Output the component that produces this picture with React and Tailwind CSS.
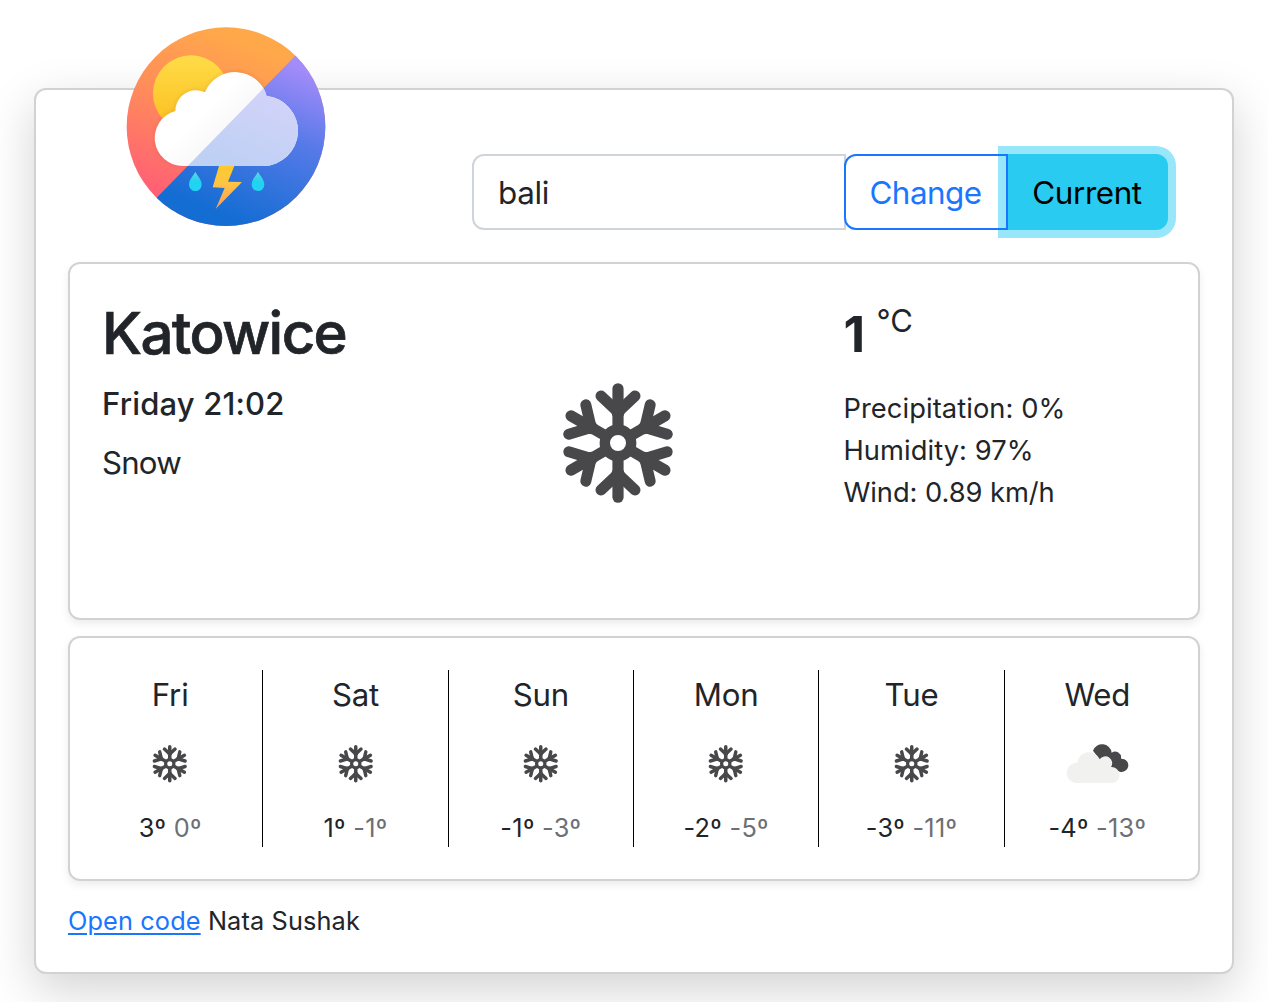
const forecast = [
  { day: "Fri", high: "3º", low: "0º", icon: "snow" },
  { day: "Sat", high: "1º", low: "-1º", icon: "snow" },
  { day: "Sun", high: "-1º", low: "-3º", icon: "snow" },
  { day: "Mon", high: "-2º", low: "-5º", icon: "snow" },
  { day: "Tue", high: "-3º", low: "-11º", icon: "snow" },
  { day: "Wed", high: "-4º", low: "-13º", icon: "clouds" },
];

function Logo() {
  const cloud =
    "M218 468A84 84 0 0 1 196 303A62 62 0 0 1 285 247A98 98 0 0 1 470 258A105.3 105.3 0 0 1 459 468Z";
  return (
    <svg viewBox="48 51 600 600" className="block size-full">
      <defs>
        <clipPath id="disc">
          <circle cx="348" cy="350" r="298" />
        </clipPath>
        <clipPath id="lower">
          <path d="M760 -72L760 760L-52 760Z" />
        </clipPath>
        <linearGradient id="warm" gradientUnits="userSpaceOnUse" x1="340" y1="70" x2="150" y2="550">
          <stop offset="0" stopColor="#ffa84a" />
          <stop offset="0.45" stopColor="#ff8d5a" />
          <stop offset="1" stopColor="#ff6074" />
        </linearGradient>
        <linearGradient id="cool" gradientUnits="userSpaceOnUse" x1="590" y1="180" x2="400" y2="640">
          <stop offset="0" stopColor="#a48bfa" />
          <stop offset="0.42" stopColor="#567ae8" />
          <stop offset="1" stopColor="#146dd3" />
        </linearGradient>
        <linearGradient id="sun" x1="0" y1="0" x2="0" y2="1">
          <stop offset="0" stopColor="#ffdc48" />
          <stop offset="1" stopColor="#fbbd1e" />
        </linearGradient>
        <linearGradient id="whiteCloud" gradientUnits="userSpaceOnUse" x1="290" y1="290" x2="352" y2="352">
          <stop offset="0" stopColor="#ffffff" />
          <stop offset="1" stopColor="#f9f9f9" />
        </linearGradient>
        <linearGradient id="blueCloud" gradientUnits="userSpaceOnUse" x1="480" y1="240" x2="380" y2="468">
          <stop offset="0" stopColor="#d3d3f9" />
          <stop offset="1" stopColor="#bed0f4" />
        </linearGradient>
        <linearGradient id="bolt" x1="0" y1="0" x2="0" y2="1">
          <stop offset="0" stopColor="#fdc92c" />
          <stop offset="0.4" stopColor="#fec545" />
          <stop offset="1" stopColor="#ff9a50" />
        </linearGradient>
        <linearGradient id="drop" x1="0" y1="0" x2="0" y2="1">
          <stop offset="0" stopColor="#62d5e4" />
          <stop offset="0.5" stopColor="#22d3f0" />
          <stop offset="1" stopColor="#20d4f4" />
        </linearGradient>
        <filter id="soft" x="-10%" y="-10%" width="120%" height="120%">
          <feGaussianBlur stdDeviation="8" />
        </filter>
      </defs>
      <g clipPath="url(#disc)">
        <rect x="48" y="51" width="600" height="600" fill="url(#warm)" />
        <circle cx="243" cy="250" r="114" fill="url(#sun)" />
        <path d={cloud} fill="#7a3030" opacity="0.16" filter="url(#soft)" />
        <rect x="48" y="51" width="600" height="600" fill="url(#cool)" clipPath="url(#lower)" />
        <path d={cloud} fill="url(#whiteCloud)" />
        <g clipPath="url(#lower)">
          <path d={cloud} fill="url(#blueCloud)" />
        </g>
        <path d="M327 468H373L354 515L396 516L317 597L344 534L308 532Z" fill="url(#bolt)" />
        <path d="M256 485C263 499 275 508 275 524A19 19 0 0 1 237 524C237 508 249 499 256 485Z" fill="url(#drop)" />
        <path d="M444 485C451 499 463 508 463 524A19 19 0 0 1 425 524C425 508 437 499 444 485Z" fill="url(#drop)" />
      </g>
    </svg>
  );
}

function Snowflake({ className }) {
  return (
    <svg viewBox="-60 -60 120 120" className={className} fill="none" stroke="#48484a" strokeLinecap="round" strokeLinejoin="round">
      <circle r="13.2" strokeWidth="10.4" />
      {[0, 60, 120, 180, 240, 300].map((a) => (
        <g key={a} transform={`rotate(${a})`}>
          <path d="M0 -17V-54.2" strokeWidth="11.2" />
          <path d="M-17 -47L0 -31L17 -47" strokeWidth="11" />
          <path d="M-10 -39L-5 -43H5L10 -39L5.4 -27H-5.4Z" fill="#48484a" stroke="none" />
        </g>
      ))}
    </svg>
  );
}

function Clouds() {
  return (
    <svg viewBox="195 307 195 126" className="mb-[2px] h-[42px] w-[65px]">
      <path
        d="M279 333A29 29 0 0 1 335 339A18 18 0 0 1 363 357A20 20 0 1 1 353 393L330 383L298 358Z"
        fill="#48484a"
      />
      <path
        d="M229 430A30 30 0 0 1 232 369A35 35 0 0 1 299 359A20 20 0 0 1 333 382A24 24 0 0 1 336 430Z"
        fill="#f1f1f0"
      />
    </svg>
  );
}

export default function App() {
  return (
    <div className="h-[1002px] overflow-hidden bg-white px-[34px] pt-[88px] font-['Inter',sans-serif] text-[#212529]">
      <main className="h-[886px] rounded-[12px] border-2 border-[#d2d2d2] bg-white px-8 shadow-[0_16px_48px_rgba(0,0,0,0.175)]">
        <header className="flex h-[172px] items-start">
          <div className="-mt-[63px] ml-[58px] size-[200px] shrink-0">
            <Logo />
          </div>
          <form className="mt-16 ml-[146px] flex h-[76px] text-[31.4px] leading-[72px]" onSubmit={(e) => e.preventDefault()}>
            <input
              defaultValue="bali"
              className="w-[374px] rounded-l-[12px] border-2 border-[#ced4da] bg-white px-6 pt-[2px] tracking-[-0.36px] outline-none"
            />
            <button className="z-20 -ml-0.5 w-[164px] rounded-l-[12px] border-2 border-[#1a75ff] pt-px pr-px text-center tracking-[-0.5px] text-[#1a75ff]">
              Change
            </button>
            <button className="z-10 -ml-0.5 w-[162px] rounded-r-[12px] bg-[#29cbf0] pt-px text-center tracking-[-0.4px] text-black shadow-[0_0_0_8px_#97e6f9]">
              Current
            </button>
          </form>
        </header>

        <section className="grid h-[358px] grid-cols-[371px_371px_1fr] rounded-[12px] border-2 border-[#d2d2d2] pl-8 shadow-[0_4px_8px_rgba(0,0,0,0.075)]">
          <div className="pt-[33px]">
            <h1 className="text-[58.2px] leading-[72px] font-medium tracking-[-1.62px] [-webkit-text-stroke:0.7px_#212529]">Katowice</h1>
            <h2 className="mt-[15px] text-[31px] leading-[40px] font-medium tracking-[0.16px]">Friday 21:02</h2>
            <p className="mt-[19px] text-[31.2px] leading-[40px] tracking-[-0.8px]">Snow</p>
          </div>
          <div className="pt-[119px] pl-[85px]">
            <Snowflake className="size-[120px]" />
          </div>
          <div className="-ml-[0.6px] pt-[40px]">
            <div className="flex items-start">
              <strong className="w-[33px] text-[50px] leading-[60px] font-bold">1</strong>
              <span className="-mt-[3px] text-[31px] leading-[40px]">°C</span>
            </div>
            <ul className="mt-[24px] text-[27.3px] leading-[42px]">
              <li className="tracking-[0.08px]">Precipitation: 0%</li>
              <li className="tracking-[0.08px]">Humidity: 97%</li>
              <li className="tracking-[-0.05px]">Wind: 0.89 km/h</li>
            </ul>
          </div>
        </section>

        <section className="mt-4 h-[245px] rounded-[12px] border-2 border-[#d2d2d2] px-2 pt-8 shadow-[0_4px_8px_rgba(0,0,0,0.075)]">
          <div className="grid h-[177px] grid-cols-6 divide-x divide-black">
            {forecast.map((f) => (
              <div key={f.day} className="flex flex-col items-center pt-[5px]">
                <div className="text-[31.2px] leading-[40px] tracking-[-0.2px]">{f.day}</div>
                <div className="mt-[19px] flex h-[60px] items-center justify-center">
                  {f.icon === "snow" ? <Snowflake className="size-[37.5px]" /> : <Clouds />}
                </div>
                <div className="mt-[15px] text-[25.3px] leading-[38px] tracking-[0.3px]">
                  {f.high} <span className="text-[#6c7074]">{f.low}</span>
                </div>
              </div>
            ))}
          </div>
        </section>

        <footer className="mt-5 text-[25.3px] leading-[40px] tracking-[0.13px]">
          <a href="#" className="text-[#1a75ff] underline decoration-2 underline-offset-[3px]">Open code</a> Nata Sushak
        </footer>
      </main>
    </div>
  );
}
